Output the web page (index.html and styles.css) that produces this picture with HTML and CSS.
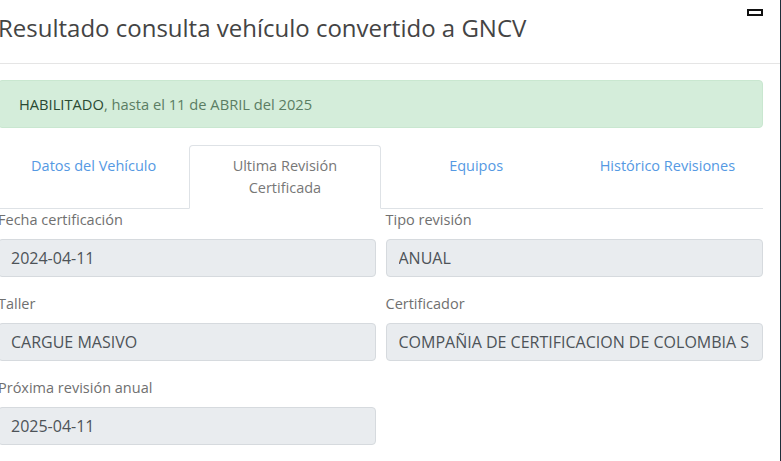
FILE: index.html
```html
<!DOCTYPE html>
<html lang="es">
<head>
<meta charset="utf-8">
<title>Resultado consulta</title>
<link rel="stylesheet" href="styles.css">
</head>
<body>
<div class="modal">
  <div class="modal-header">
    <h4 class="modal-title">Resultado consulta vehículo convertido a GNCV</h4>
    <button class="minimize" aria-label="Minimizar">
      <svg width="16" height="8" viewBox="0 0 16 8"><rect x="1" y="1" width="14" height="5" fill="none" stroke="#111" stroke-width="2"/></svg>
    </button>
  </div>
  <div class="modal-body">
    <div class="alert"><span class="strong">HABILITADO</span>, hasta el 11 de ABRIL del 2025</div>
    <ul class="tabs">
      <li class="tab"><a>Datos del Vehículo</a></li>
      <li class="tab active"><a>Ultima Revisión<br>Certificada</a></li>
      <li class="tab"><a>Equipos</a></li>
      <li class="tab"><a>Histórico Revisiones</a></li>
    </ul>
    <div class="form">
      <div class="group">
        <label>Fecha certificación</label>
        <div class="input"><span class="value">2024-04-11</span></div>
      </div>
      <div class="group">
        <label>Tipo revisión</label>
        <div class="input"><span class="value">ANUAL</span></div>
      </div>
      <div class="group">
        <label>Taller</label>
        <div class="input"><span class="value">CARGUE MASIVO</span></div>
      </div>
      <div class="group">
        <label>Certificador</label>
        <div class="input"><span class="value">COMPAÑIA DE CERTIFICACION DE COLOMBIA S.A.S.</span></div>
      </div>
      <div class="group">
        <label>Próxima revisión anual</label>
        <div class="input"><span class="value">2025-04-11</span></div>
      </div>
    </div>
  </div>
</div>
</body>
</html>
```
FILE: styles.css
```css
html, body {
  margin: 0;
  padding: 0;
  background: #1f2d3a;
  overflow: hidden;
}
body {
  width: 781px;
  height: 461px;
  font-family: "Open Sans", "Noto Sans", sans-serif;
}
.modal {
  width: 780px;
  height: 461px;
  background: #fff;
  overflow: hidden;
}
.modal-header {
  height: 63px;
  border-bottom: 1px solid #e5e5e5;
  display: flex;
  justify-content: space-between;
  align-items: flex-start;
  margin-left: -2px;
}
.modal-title {
  margin: 0;
  padding-top: 11px;
  font-size: 24px;
  font-weight: 400;
  line-height: 34px;
  color: #444;
}
.minimize {
  border: 0;
  background: none;
  padding: 0;
  margin: 9px 15px 0 0;
  width: 18px;
  height: 10px;
  display: flex;
}
.modal-body {
  padding: 16px 17px 0 0;
  margin-left: -2px;
}
.alert {
  background: #d4edda;
  border: 1px solid #c9e7d0;
  border-radius: 4px;
  height: 46px;
  box-sizing: content-box;
  padding: 0 20px;
  display: flex;
  align-items: center;
  font-size: 14.7px;
  color: #5b7d63;
  margin-bottom: 17px;
}
.alert .strong {
  color: #2a4a33;
}
.tabs {
  list-style: none;
  margin: 0;
  padding: 0;
  display: flex;
  border-bottom: 1px solid #dee2e6;
}
.tab {
  flex: 1;
  text-align: center;
  font-size: 14.5px;
  line-height: 22px;
  padding: 9px 8px;
  border: 1px solid transparent;
  border-top-left-radius: 4px;
  border-top-right-radius: 4px;
  margin-bottom: -1px;
  color: #5599e3;
  white-space: nowrap;
}
.tab.active {
  color: #777;
  border-color: #dee2e6 #dee2e6 #fff;
  background: #fff;
}
.form {
  display: grid;
  grid-template-columns: 1fr 1fr;
  column-gap: 10px;
}
.group {
  margin-bottom: 16px;
  min-width: 0;
}
label {
  display: block;
  font-size: 14.5px;
  line-height: 22px;
  color: #707070;
  margin-bottom: 8px;
}
.input {
  height: 36px;
  border: 1px solid #d6dade;
  border-radius: 4px;
  background: #e9ecef;
  padding: 0 12px;
  font-size: 16px;
  line-height: 36px;
  color: #4d5358;
}
.value {
  display: block;
  white-space: nowrap;
  overflow: hidden;
}
```
